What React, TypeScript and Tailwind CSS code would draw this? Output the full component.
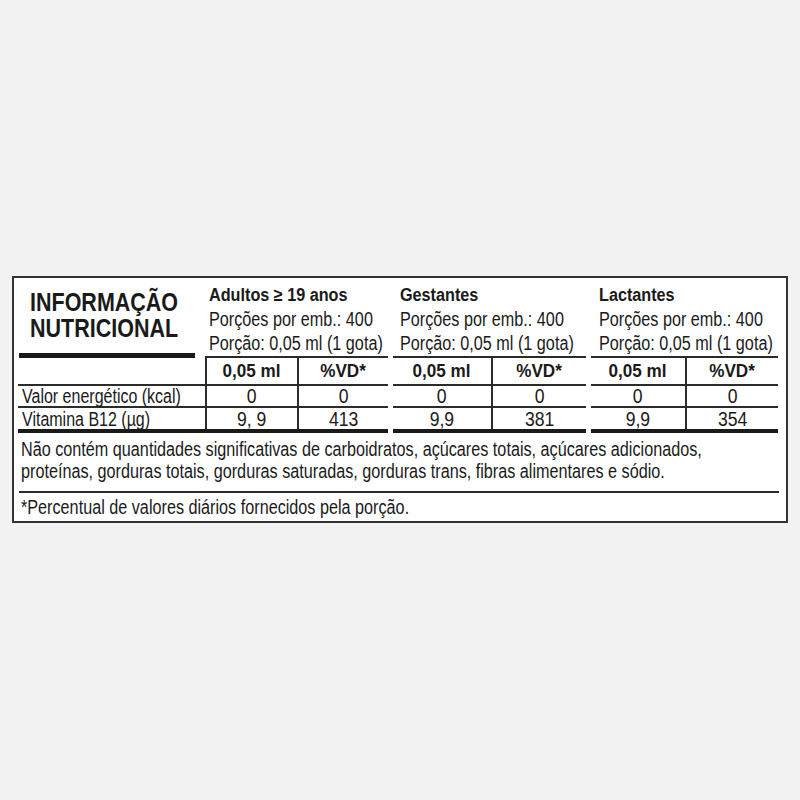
const groups = [
  { title: 'Adultos ≥ 19 anos', w: 'w-[183px]', pad: 'pl-[4px]', c1: 'w-[92px]', left: 'border-l-2', b12: '9, 9', vd: '413' },
  { title: 'Gestantes', w: 'w-[193px] ml-[5px]', pad: 'pl-[7px]', c1: 'w-[100px]', left: '', b12: '9,9', vd: '381' },
  { title: 'Lactantes', w: 'w-[187px] ml-[5px]', pad: 'pl-[8px]', c1: 'w-[96px]', left: '', b12: '9,9', vd: '354' },
];

const Line = () => <div className="h-[2px] bg-[#2b2b2b]" />;

// condensed look: the narrow face is not installed, so squeeze Liberation Sans
const Narrow = ({ children, cls }: { children: React.ReactNode; cls: string }) => (
  <div className={`origin-left whitespace-nowrap ${cls}`}>{children}</div>
);

const Mid = ({ children, bold }: { children: React.ReactNode; bold?: boolean }) => (
  <span className={`inline-block origin-center whitespace-nowrap ${bold ? 'scale-x-[0.95]' : 'scale-x-[0.88]'}`}>{children}</span>
);

const Cells = ({ h, c1, left, a, b, bold }: { h: string; c1: string; left: string; a: string; b: string; bold?: boolean }) => (
  <div className={`flex ${h} ${left} border-[#2b2b2b] ${bold ? 'text-[18px] font-bold' : 'text-[20px]'}`}>
    <div className={`${c1} flex items-center justify-center border-r-2 border-[#2b2b2b] leading-none`}>
      <Mid bold={bold}>{a}</Mid>
    </div>
    <div className="flex flex-1 items-center justify-center leading-none">
      <Mid bold={bold}>{b}</Mid>
    </div>
  </div>
);

export default function App() {
  return (
    <div className="min-h-screen bg-[#f2f2f2] pl-[12px] pt-[276px] font-['Liberation_Sans',Arial,sans-serif] text-[#1a1a1a]">
      <div className="h-[247px] w-[776px] overflow-hidden border-2 border-[#333] bg-white pl-[4px]">
        <div className="flex">
          {/* label column */}
          <div className="flex w-[187px] flex-col">
            <div className="h-[75px] pl-[12px] pt-[11px] text-[25px] font-bold leading-[26px]">
              <Narrow cls="scale-x-[0.86]">INFORMAÇÃO</Narrow>
              <Narrow cls="scale-x-[0.86]">NUTRICIONAL</Narrow>
            </div>
            <div className="ml-[1px] h-[5px] w-[176px] bg-[#1a1a1a]" />
            <div className="h-[26px]" />
            <Line />
            <div className="flex h-[20px] items-center pl-[4px] text-[20px] leading-none">
              <Narrow cls="scale-x-[0.8]">Valor energético (kcal)</Narrow>
            </div>
            <Line />
            <div className="flex h-[21px] items-center pl-[4px] text-[20px] leading-none">
              <Narrow cls="scale-x-[0.8]">Vitamina B12 (µg)</Narrow>
            </div>
            <div className="h-[4px] bg-[#1a1a1a]" />
          </div>

          {groups.map((g) => (
            <div key={g.title} className={`flex flex-col ${g.w}`}>
              <div className={`h-[78px] pt-[5px] ${g.pad}`}>
                <Narrow cls="scale-x-[0.9] text-[18px] font-bold leading-[24px]">{g.title}</Narrow>
                <Narrow cls="scale-x-[0.81] text-[20px] leading-[24px]">Porções por emb.: 400</Narrow>
                <Narrow cls="scale-x-[0.81] text-[20px] leading-[24px]">Porção: 0,05 ml (1 gota)</Narrow>
              </div>
              <Line />
              <Cells h="h-[26px]" c1={g.c1} left={g.left} a="0,05 ml" b="%VD*" bold />
              <Line />
              <Cells h="h-[20px]" c1={g.c1} left={g.left} a="0" b="0" />
              <Line />
              <Cells h="h-[21px]" c1={g.c1} left={g.left} a={g.b12} b={g.vd} />
              <div className="h-[4px] bg-[#1a1a1a]" />
            </div>
          ))}
        </div>

        <div className="h-[58px] pl-[3px] pt-[5px] text-[20px] leading-[22px]">
          <Narrow cls="scale-x-[0.81]">
            Não contém quantidades significativas de carboidratos, açúcares totais, açúcares adicionados,
          </Narrow>
          <Narrow cls="scale-x-[0.81]">
            proteínas, gorduras totais, gorduras saturadas, gorduras trans, fibras alimentares e sódio.
          </Narrow>
        </div>
        <div className="ml-[1px] h-[2px] w-[760px] bg-[#2b2b2b]" />
        <div className="pl-[3px] pt-[4px] text-[20px] leading-[20px]">
          <Narrow cls="scale-x-[0.81]">*Percentual de valores diários fornecidos pela porção.</Narrow>
        </div>
      </div>
    </div>
  );
}
